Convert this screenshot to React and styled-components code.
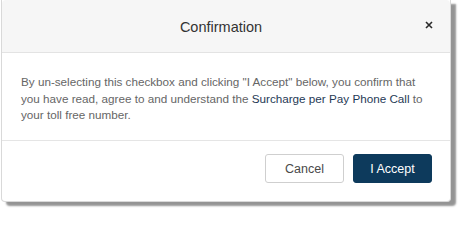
import React from "react";
import styled, { createGlobalStyle } from "styled-components";

const Global = createGlobalStyle`
  html, body { margin: 0; padding: 0; background: #ffffff; }
  body { font-family: "Liberation Sans", Arial, sans-serif; }
  * { box-sizing: border-box; }
`;

const Page = styled.div`
  width: 463px;
  height: 211px;
  padding: 0 0 0 1px;
  background: #ffffff;
`;

const Dialog = styled.div`
  width: 450px;
  height: 202px;
  background: #ffffff;
  border: 1px solid #d9d9d9;
  border-top: none;
  border-radius: 0 0 4px 4px;
  box-shadow: 5px 4px 2px rgba(0, 0, 0, 0.42);
  display: flex;
  flex-direction: column;
`;

const Header = styled.div`
  height: 53px;
  flex: none;
  display: flex;
  align-items: center;
  padding: 0 16px 0 16px;
  background: #f6f6f6;
  border-bottom: 1px solid #e3e3e3;
  border-radius: 4px 4px 0 0;
`;

const Title = styled.h4`
  flex: 1;
  margin: 0;
  text-align: center;
  font-size: 14.5px;
  font-weight: normal;
  color: #333333;
  padding-top: 1px;
`;

const Close = styled.button`
  width: 10px;
  padding: 0;
  border: none;
  background: none;
  display: flex;
  align-items: center;
  justify-content: center;
  color: #222;
  cursor: pointer;
  margin-top: -2px;
`;

const Body = styled.div`
  flex: 1;
  padding: 21px 18px 16px 19px;
  font-size: 11.7px;
  line-height: 16.5px;
  color: #666666;
`;

const Link = styled.span`
  color: #1f3a56;
`;

const Footer = styled.div`
  flex: none;
  height: 61px;
  border-top: 1px solid #e5e5e5;
  display: flex;
  justify-content: flex-end;
  align-items: flex-start;
  gap: 9px;
  padding: 13px 18px 0 0;
`;

const Button = styled.button`
  width: 79px;
  height: 29px;
  border-radius: 3px;
  font-family: "Liberation Sans", Arial, sans-serif;
  font-size: 12.5px;
  cursor: pointer;
  border: 1px solid ${(p) => (p.$primary ? "#0d3a5c" : "#cfcfcf")};
  background: ${(p) => (p.$primary ? "#0d3a5c" : "#ffffff")};
  color: ${(p) => (p.$primary ? "#ffffff" : "#4a4a4a")};
`;

export default function App() {
  return (
    <Page>
      <Global />
      <Dialog>
        <Header>
          <Title>Confirmation</Title>
          <Close aria-label="Close">
            <svg width="8" height="8" viewBox="0 0 8 8">
              <path d="M1 1 L7 7 M7 1 L1 7" stroke="#2a2a2a" strokeWidth="1.6" />
            </svg>
          </Close>
        </Header>
        <Body>
          By un-selecting this checkbox and clicking "I Accept" below, you confirm that
          you have read, agree to and understand the <Link>Surcharge per Pay Phone Call</Link> to
          your toll free number.
        </Body>
        <Footer>
          <Button>Cancel</Button>
          <Button $primary>I Accept</Button>
        </Footer>
      </Dialog>
    </Page>
  );
}
